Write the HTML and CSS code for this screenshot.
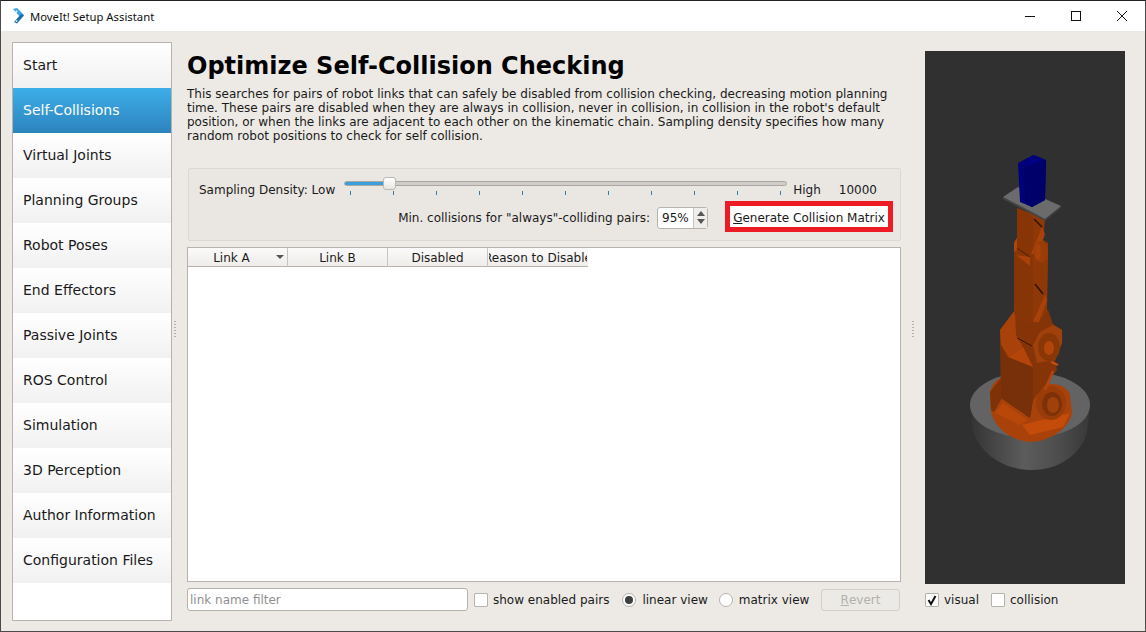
FILE: index.html
```html
<!DOCTYPE html>
<html>

<head>
  <title>MoveIt! Setup Assistant</title>
  <link rel="stylesheet" href="styles.css">
</head>

<body>
  <div class="window">
    <div class="titlebar">
      <svg class="logo" width="12" height="16" viewBox="0 0 12 16">
        <path d="M0 1 L4 0 L11 7 L8 10 Z" fill="#35a4e0"/>
        <path d="M8 6 L11 7.5 L4 15.5 L1 14 Z" fill="#1c6fa6"/>
        <circle cx="3.5" cy="3.5" r="1" fill="#fff"/>
        <circle cx="3.5" cy="13" r="1" fill="#cfe8f7"/>
      </svg>
      <span class="title">MoveIt! Setup Assistant</span>
      <div class="controls">
        <svg width="46" height="30" viewBox="0 0 46 30"><path d="M18 15.5 H28" stroke="#111" fill="none"/></svg>
        <svg width="46" height="30" viewBox="0 0 46 30"><rect x="18.5" y="10.5" width="9" height="9" stroke="#111" fill="none"/></svg>
        <svg width="46" height="30" viewBox="0 0 46 30"><path d="M18 10 L28 20 M28 10 L18 20" stroke="#111" fill="none"/></svg>
      </div>
    </div>

    <div class="content">
      <ul class="nav">
        <li>Start</li>
        <li class="active">Self-Collisions</li>
        <li>Virtual Joints</li>
        <li>Planning Groups</li>
        <li>Robot Poses</li>
        <li>End Effectors</li>
        <li>Passive Joints</li>
        <li>ROS Control</li>
        <li>Simulation</li>
        <li>3D Perception</li>
        <li>Author Information</li>
        <li>Configuration Files</li>
      </ul>

      <div class="splitter"><span class="grip"></span></div>

      <div class="main">
        <h1>Optimize Self-Collision Checking</h1>
        <p class="desc">This searches for pairs of robot links that can safely be disabled from collision checking, decreasing motion planning time. These pairs are disabled when they are always in collision, never in collision, in collision in the robot's default position, or when the links are adjacent to each other on the kinematic chain. Sampling density specifies how many random robot positions to check for self collision.</p>

        <div class="group">
          <div class="density">
            <span>Sampling Density: Low</span>
            <div class="slider">
              <div class="track"><div class="fill"></div><div class="handle"></div></div>
              <div class="ticks">
                <i></i><i></i><i></i><i></i><i></i><i></i><i></i><i></i><i></i><i></i><i></i>
              </div>
            </div>
            <span class="high">High</span>
            <span class="value">10000</span>
          </div>
          <div class="minrow">
            <span class="minlabel">Min. collisions for "always"-colliding pairs:</span>
            <div class="spin">
              <span class="spin-text">95%</span>
              <span class="spin-btns"><b class="up"></b><b class="down"></b></span>
            </div>
            <div class="btn-mark"><u>G</u>enerate Collision Matrix</div>
          </div>
        </div>

        <div class="table">
          <div class="thead">
            <div class="th sorted">Link A<span class="sort"></span></div>
            <div class="th">Link B</div>
            <div class="th">Disabled</div>
            <div class="th last"><div class="clip"><span>Reason to Disable</span></div></div>
          </div>
        </div>

        <div class="bottom">
          <div class="filter">link name filter</div>
          <label class="opt first"><span class="check"></span>show enabled pairs</label>
          <label class="opt second"><span class="radio on"></span>linear view</label>
          <label class="opt third"><span class="radio"></span>matrix view</label>
          <div class="revert"><u>R</u>evert</div>
        </div>
      </div>

      <div class="splitter wide"><span class="grip"></span></div>

      <div class="side">
        <div class="viewport">
          <svg class="robot" width="200" height="533" viewBox="925 51 200 533">
            <defs>
              <linearGradient id="rim" x1="0" x2="1" y1="0" y2="0">
                <stop offset="0" stop-color="#333"/>
                <stop offset="0.45" stop-color="#5c5c5c"/>
                <stop offset="0.75" stop-color="#4c4c4c"/>
                <stop offset="1" stop-color="#383838"/>
              </linearGradient>
            </defs>
            <!-- base disc -->
            <path d="M970 405 L973 432 C982 456 1006 470 1032 470 C1060 470 1082 453 1087 432 L1090 405 Z" fill="url(#rim)"/>
            <ellipse cx="1030" cy="405" rx="60" ry="33" fill="#636363"/>
            <!-- foot -->
            <path d="M990 392 C992 384 996 380 1001 378 L1060 385 C1066 388 1070 392 1070 396 L1072 413 C1070 425 1058 436 1040 441 L1030 442 C1010 440 995 428 991 412 Z" fill="#a8420a"/>
            <path d="M990 392 L1001 378 L1002 398 L994 412 L991 410 Z" fill="#7f3208"/>
            <path d="M995 413 L1003 403 L1028 420 L1020 425 Z" fill="#b8480a"/>
            <path d="M1022 425 L1070 413 L1063 427 L1030 435 Z" fill="#c44c0b"/>
            <ellipse cx="1051" cy="403" rx="15" ry="17" fill="#9a3c08"/>
            <ellipse cx="1052" cy="404" rx="10" ry="12" fill="#7c3108"/>
            <ellipse cx="1053" cy="405" rx="6" ry="8" fill="#a0400a"/>
            <!-- lower link -->
            <path d="M1015 310 L1000 330 L1001 398 L1030 418 L1033 400 L1057 370 L1055 360 L1062 343 L1062 330 L1053 324 L1048 310 Z" fill="#853407"/>
            <path d="M1015 310 L1000 330 L1001 345 L1008 357 L1023 347 L1016 335 Z" fill="#a8420a"/>
            <path d="M1001 345 L1008 357 L1033 367 L1033 400 L1030 418 L1001 398 Z" fill="#78300a"/>
            <path d="M1008 357 L1023 347 L1033 367 Z" fill="#b3450a"/>
            <path d="M1017 338 L1032 346" stroke="#3c1500" fill="none"/>
            <path d="M1033 345 L1040 332 L1053 325 L1062 330 L1062 343 L1055 360 L1037 363 Z" fill="#a0400a"/>
            <ellipse cx="1049" cy="347" rx="11" ry="14" fill="#8a3708"/>
            <ellipse cx="1049" cy="348" rx="5" ry="7" fill="#b3450a"/>
            <path d="M1051 362 L1058 365" stroke="#c94f0c" stroke-width="2" fill="none"/>
            <path d="M1053 371 L1045 390" stroke="#b3450a" stroke-width="2.5" fill="none"/>
            <!-- upper links -->
            <path d="M1017 208 L1017 238 L1014 243 L1014 312 L1020 322 L1038 322 L1047 312 L1048 260 L1048 243 L1043 240 L1045 219 Z" fill="#8f3807"/>
            <path d="M1017 208 L1033 216 L1033 322 L1020 322 L1014 312 L1014 243 L1017 238 Z" fill="#873507"/>
            <path d="M1042 227 L1045 234 L1038 254 L1031 254 Z" fill="#a8420a"/>
            <path d="M1034 219 L1042 227" stroke="#2c1000" stroke-width="1.4" fill="none"/>
            <path d="M1017 248 L1030 257" stroke="#4c1c04" fill="none"/>
            <path d="M1016 255 L1030 257 L1030 266 Z" fill="#a8420a"/>
            <path d="M1014 243 L1017 238 L1017 250 L1014 252 Z" fill="#b3450a"/>
            <ellipse cx="1041" cy="252" rx="7" ry="11" fill="#9a3c08"/>
            <ellipse cx="1038" cy="252" rx="3" ry="8" fill="#a8420a"/>
            <path d="M1045 295 L1047 300 L1039 322 L1033 322 Z" fill="#a8420a"/>
            <path d="M1035 284 L1043 294" stroke="#2c1000" stroke-width="1.4" fill="none"/>
            <!-- tool plate -->
            <path d="M1003 197 L1045 219 L1045 221 L1003 199 Z" fill="#454545"/>
            <path d="M1045 219 L1061 206 L1061 208 L1045 221 Z" fill="#3f3f3f"/>
            <path d="M1003 197 L1018 187 L1061 206 L1045 219 Z" fill="#6b6b6b"/>
            <!-- gripper -->
            <path d="M1018 163 L1033 155 L1037 156 L1046 160 L1045 200 L1032 207 L1020 202 Z" fill="#00007a"/>
            <path d="M1026 166 L1046 160 L1045 200 L1032 207 L1026 203 Z" fill="#00006a"/>
            <path d="M1026 166 L1037 159" stroke="#0000a0" fill="none"/>
            <path d="M1025 167 L1026 203" stroke="#000058" fill="none"/>
          </svg>
        </div>
        <div class="viewopts">
          <label class="opt"><span class="check">
            <svg width="12" height="12" viewBox="0 0 12 12"><path d="M2.5 6 L5 10 L9.5 2" stroke="#111" stroke-width="2" fill="none"/></svg>
          </span>visual</label>
          <label class="opt"><span class="check"></span>collision</label>
        </div>
      </div>
    </div>
  </div>
</body>

</html>
```

FILE: styles.css
```css
html, body {
  margin: 0;
  padding: 0;
  height: 100%;
  overflow: hidden;
}

body {
  font-family: "DejaVu Sans", sans-serif;
  font-size: 12px;
  color: #1a1a1a;
}

.window {
  box-sizing: border-box;
  height: 632px;
  border: 1px solid #4a4a4a;
  border-top-color: #222;
  display: flex;
  flex-direction: column;
  background: #edeae6;
}

.titlebar {
  height: 30px;
  background: #fff;
  display: flex;
  align-items: center;
  flex-shrink: 0;
}

.logo {
  margin-left: 12px;
  margin-right: 5px;
}

.title {
  font-family: "Noto Sans", sans-serif;
  font-size: 11.3px;
  color: #111;
}

.controls {
  margin-left: auto;
  display: flex;
  gap: 0;
}

.controls svg {
  display: block;
}

.content {
  flex: 1;
  display: flex;
  min-height: 0;
  padding-left: 11px;
}

.nav {
  list-style: none;
  box-sizing: border-box;
  width: 160px;
  margin: 11px 0 10px;
  padding: 0;
  background: #fff;
  border: 1px solid #b6b3ae;
  flex-shrink: 0;
}

.nav li {
  box-sizing: border-box;
  height: 45px;
  display: flex;
  align-items: center;
  padding: 0 0 2px 10px;
  font-size: 14px;
  background: linear-gradient(#ffffff, #f1f1f1);
  color: #1a1a1a;
}

.nav li.active {
  color: #fff;
  background: linear-gradient(#3daee9, #2d83bd);
}

.splitter {
  width: 15px;
  flex-shrink: 0;
  display: flex;
  align-items: center;
  padding-left: 2px;
  box-sizing: border-box;
}

.splitter.wide {
  width: 24px;
  padding-left: 11px;
}

.grip {
  width: 2px;
  height: 16px;
  margin-bottom: 4px;
  background: repeating-linear-gradient(#b3b0ab 0 1px, transparent 1px 3px);
}

.main {
  width: 714px;
  flex-shrink: 0;
  display: flex;
  flex-direction: column;
}

h1 {
  font-size: 24px;
  line-height: 28px;
  font-weight: bold;
  color: #000;
  margin: 21px 0 0;
}

.desc {
  margin: 7px 0 0;
  line-height: 14px;
  height: 56px;
  width: 712px;
  color: #1a1a1a;
}

.group {
  box-sizing: border-box;
  margin: 25px 0 0 1px;
  height: 73px;
  border: 1px solid #dcd9d4;
  border-radius: 2px;
  background: #eae7e3;
  padding: 7px 9px 0 10px;
}

.density {
  box-sizing: border-box;
  display: flex;
  height: 25px;
  padding-top: 2px;
  align-items: center;
}

.slider {
  width: 443px;
  margin-left: 8px;
  margin-top: -4px;
  position: relative;
  left: 1px;
}

.track {
  position: relative;
  height: 5px;
  background: #d0cdc8;
  border: 1px solid #aaa7a2;
  box-sizing: border-box;
  border-radius: 3px;
}

.fill {
  width: 42px;
  height: 100%;
  background: #3b9fdc;
  border-radius: 2px;
}

.handle {
  position: absolute;
  left: 38px;
  top: -5px;
  width: 13px;
  height: 13px;
  box-sizing: border-box;
  border: 1px solid #bcb9b4;
  border-radius: 3px;
  background: linear-gradient(#fff, #e8e6e2);
}

.ticks {
  display: flex;
  justify-content: space-between;
  margin: 5px 6px 0;
  height: 4px;
}

.ticks i {
  display: block;
  width: 1px;
  height: 4px;
  background: #2d7fb5;
}

.high {
  margin-left: 7px;
}

.value {
  margin-left: 18px;
}

.minrow {
  display: flex;
  justify-content: flex-end;
  align-items: center;
  height: 31px;
  margin: 0 -2px 0 0;
}

.minlabel {
  padding-top: 2px;
}

.spin {
  box-sizing: border-box;
  width: 51px;
  height: 22px;
  margin: 2px 0 0 7px;
  background: #fff;
  border: 1px solid #b6b3ae;
  border-radius: 3px;
  display: flex;
  align-items: center;
}

.spin-text {
  flex: 1;
  padding-left: 4px;
}

.spin-btns {
  width: 13px;
  height: 100%;
  border-left: 1px solid #c8c5c0;
  background: #efedea;
  display: flex;
  flex-direction: column;
  align-items: center;
  justify-content: center;
  gap: 3px;
}

.up {
  border-left: 4px solid transparent;
  border-right: 4px solid transparent;
  border-bottom: 5px solid #555;
}

.down {
  border-left: 4px solid transparent;
  border-right: 4px solid transparent;
  border-top: 5px solid #555;
}

.btn-mark {
  box-sizing: border-box;
  width: 168px;
  height: 31px;
  margin-left: 17px;
  padding-top: 2px;
  border: 5px solid #ed1c24;
  background: #fff;
  display: flex;
  align-items: center;
  justify-content: center;
  white-space: pre;
}

.table {
  box-sizing: border-box;
  margin: 6px 0 0;
  height: 335px;
  background: #fff;
  border: 1px solid #b6b3ae;
}

.thead {
  display: flex;
  height: 19px;
}

.th {
  box-sizing: border-box;
  position: relative;
  width: 100px;
  height: 19px;
  padding-top: 1px;
  border-right: 1px solid #c8c5c0;
  border-bottom: 1px solid #b6b3ae;
  background: linear-gradient(#fbfafa, #efedea);
  display: flex;
  align-items: center;
  justify-content: center;
}

.th.sorted {
  padding-right: 12px;
}

.th.last {
  border-right: none;
}

.clip {
  width: 98px;
  overflow: hidden;
  white-space: nowrap;
  display: flex;
  justify-content: center;
}

.clip span {
  flex-shrink: 0;
}

.sort {
  position: absolute;
  right: 3px;
  top: 7px;
  border-left: 4px solid transparent;
  border-right: 4px solid transparent;
  border-top: 4px solid #555;
}

.bottom {
  display: flex;
  align-items: center;
  height: 23px;
  margin-top: 6px;
}

.filter {
  box-sizing: border-box;
  width: 281px;
  height: 23px;
  background: #fff;
  border: 1px solid #b6b3ae;
  border-radius: 3px;
  padding-left: 2px;
  line-height: 22px;
  color: #8f8f8f;
  flex-shrink: 0;
}

.opt {
  display: flex;
  align-items: center;
  white-space: nowrap;
}

.first {
  margin-left: 6px;
}

.second {
  margin-left: 13px;
}

.third {
  margin-left: 11px;
}

.check {
  box-sizing: border-box;
  width: 14px;
  height: 14px;
  background: #fff;
  border: 1px solid #b6b3ae;
  border-radius: 1px;
  margin-right: 5px;
  display: flex;
  align-items: center;
  justify-content: center;
}

.radio {
  box-sizing: border-box;
  width: 14px;
  height: 14px;
  border: 1px solid #b6b3ae;
  border-radius: 50%;
  background: #fff;
  margin-right: 6px;
  display: flex;
  align-items: center;
  justify-content: center;
}

.radio.on::after {
  content: "";
  width: 8px;
  height: 8px;
  border-radius: 50%;
  background: #3f3f3f;
}

.revert {
  box-sizing: border-box;
  width: 79px;
  height: 22px;
  margin-left: auto;
  margin-right: 1px;
  border: 1px solid #d2cfca;
  border-radius: 3px;
  background: #eceae6;
  color: #b3b0ab;
  display: flex;
  align-items: center;
  justify-content: center;
  white-space: pre;
}

.side {
  width: 200px;
  flex-shrink: 0;
  display: flex;
  flex-direction: column;
}

.viewport {
  margin-top: 20px;
  height: 533px;
  background: #303030;
}

.robot {
  display: block;
}

.viewopts {
  display: flex;
  gap: 12px;
  margin-top: 9px;
}
```
